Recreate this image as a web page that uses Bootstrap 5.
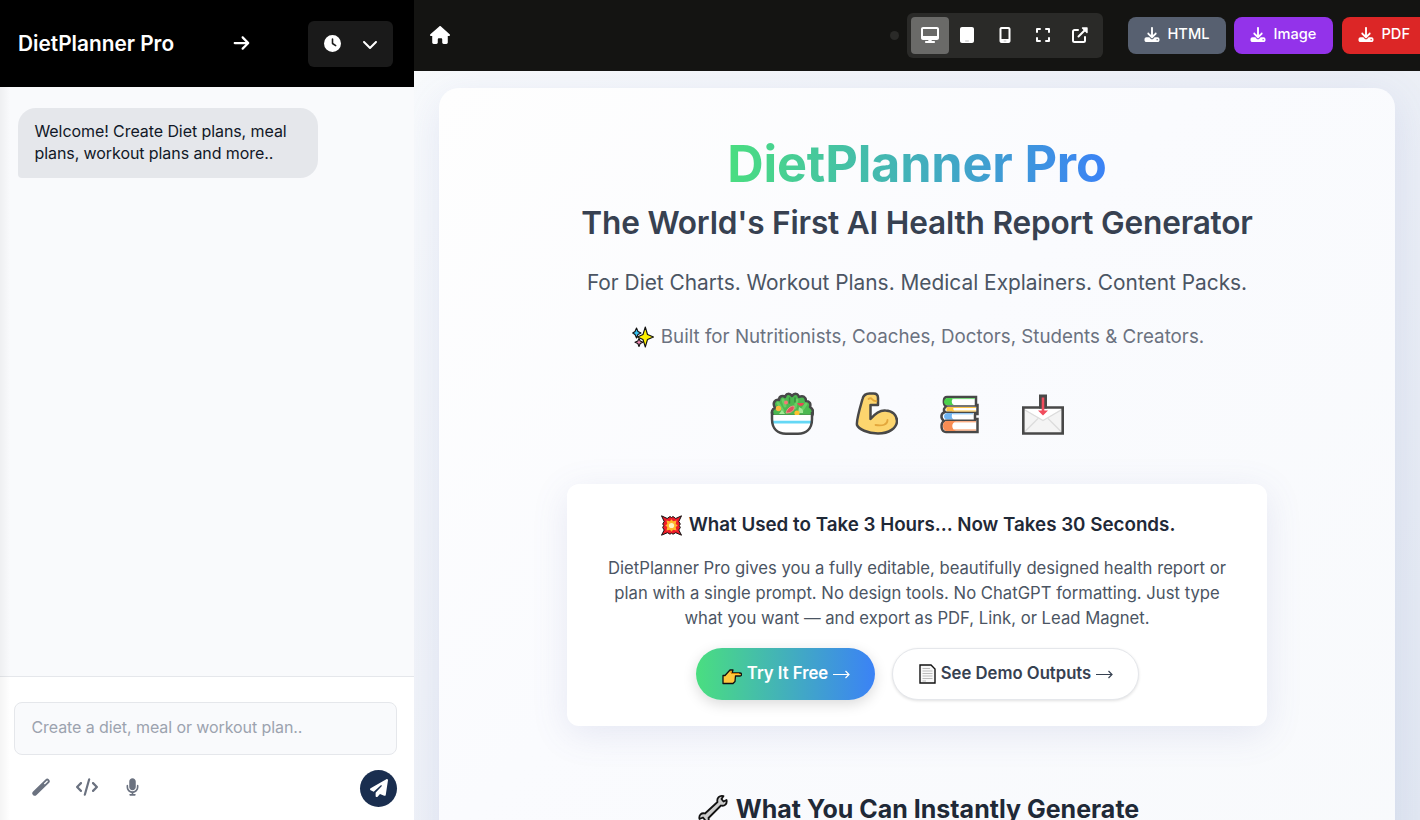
<!DOCTYPE html>
<html lang="en">
<head>
<meta charset="utf-8">
<meta name="viewport" content="width=device-width, initial-scale=1">
<title>DietPlanner Pro</title>
<link href="https://cdn.jsdelivr.net/npm/bootstrap@5.3.0/dist/css/bootstrap.min.css" rel="stylesheet">
<style>
  body { font-family: Inter, "Liberation Sans", sans-serif; color: #1f2937; height: 820px; overflow: hidden; }
  svg { display: block; flex: none; }
  .fa { fill: currentColor; }
  .line { fill: none; stroke: currentColor; }

  .side { width: 414px; background: #f9fafc; position: relative; }
  .side-edge { position: absolute; inset: 87px auto 0 0; width: 10px; background: linear-gradient(90deg, rgba(0,0,0,.045), transparent); pointer-events: none; }
  .side-head { height: 87px; background: #000; padding: 0 21px 0 18px; }
  .side-title { font-size: 20.8px; font-weight: 600; line-height: 1.2; width: 215px; padding-top: 2px; white-space: nowrap; }
  .history { width: 85px; height: 46px; background: #1a1a1a; border-radius: 6px; padding: 0 15px 0 16px; }
  .chat-area { padding: 21px 18px; }
  .bubble { width: 300px; height: 70px; background: #e5e7eb; border-radius: 18px 18px 18px 4px; padding: 12px 16.5px; font-size: 16px; letter-spacing: -.08px; line-height: 22.4px; color: #111827; white-space: nowrap; }
  .composer { height: 144px; background: #fff; border-top: 1px solid #e5e7eb; padding: 25px 17px 0 14px; }
  .prompt { height: 53px; border: 1px solid #e5e7eb; background: #f9fafc; border-radius: 8px; padding: 0 16.5px 4px; font-size: 16px; letter-spacing: -.08px; color: #9ca3af; }
  .tools { color: #6b7280; padding-top: 15px; }
  .tools > svg { margin-bottom: 3px; }
  .nudge { margin-bottom: 2px; }
  .send { width: 37px; height: 37px; background: #1a2e4f; }

  .stage { width: 1006px; }
  .topbar { height: 71px; background: #141412; padding-left: 16px; }
  .dot { width: 9px; height: 9px; background: #2a2a28; }
  .devices { height: 45px; width: 196px; background: #2a2a28; border-radius: 6px; padding: 4px; }
  .dev { width: 37.6px; height: 37px; border-radius: 4px; padding-bottom: 2px; }
  .dev.on { background: #6a6a68; }
  .export { height: 37px; border-radius: 8px; font-size: 14.6px; font-weight: 500; padding: 0 16px 2px; gap: 7.5px; }
  .ex-html { background: #576070; width: 98px; }
  .ex-image { background: #9333ea; width: 99px; }
  .ex-pdf { background: #dc2626; width: 100px; }

  .canvas-bg { min-height: 0; background: linear-gradient(135deg, #f8fafc 0%, #eef1f7 45%, #e2e8f2 100%); padding: 17px 25px 0; overflow: hidden; }
  .sheet { height: 1200px; border-radius: 20px; background: linear-gradient(135deg, #fefefe 0%, #fafbfe 35%, #f7f9fb 100%); box-shadow: 0 10px 40px rgba(90,110,190,.13); padding-top: 48px; text-align: center; white-space: nowrap; }
  .hero { font-size: 50.4px; font-weight: 700; line-height: 56px; letter-spacing: -.2px; margin: 0; background: linear-gradient(90deg, #4ade80, #3b82f6); -webkit-background-clip: text; background-clip: text; color: transparent; }
  .tagline { font-size: 31.6px; font-weight: 600; line-height: 38px; letter-spacing: -.2px; color: #374151; margin: 12px 0 0; }
  .uses { font-size: 20.86px; line-height: 34px; color: #4b5563; margin: 24px 0 0; }
  .built { font-size: 18.75px; line-height: 30px; color: #6b7280; margin-top: 22px; gap: 7px; padding-left: 2px; }
  .pics { gap: 40px; margin-top: 40px; padding-left: 1px; }
  .panel { width: 700px; height: 242px; margin: 48px auto 0; border-radius: 12px; background: #fff; box-shadow: 0 8px 36px rgba(90,100,170,.13); padding-top: 26px; }
  .panel-title { font-size: 18.78px; font-weight: 600; line-height: 30px; gap: 7px; padding-left: 2px; }
  .panel-copy { font-size: 16.66px; line-height: 25px; color: #4b5563; margin: 16px 0 17px; }
  .pill { height: 52px; font-size: 16.7px; font-weight: 600; gap: 5px; padding-left: 2px; }
  .pill-try { width: 179px; color: #fff; background: linear-gradient(90deg, #4ade80, #3b82f6); box-shadow: 0 4px 14px rgba(0,0,0,.15); }
  .pill-demo { width: 247px; color: #374151; background: #fff; border: 1px solid #e5e7eb; box-shadow: 0 1px 3px rgba(0,0,0,.12); }
  .section-title { font-size: 25px; font-weight: 700; line-height: 32px; margin-top: 67px; gap: 8px; padding-left: 3px; }
</style>
</head>
<body>
<div class="d-flex h-100">
  <aside class="side d-flex flex-column flex-shrink-0">
    <header class="side-head d-flex align-items-center text-white">
      <div class="side-title">DietPlanner Pro</div>
      <svg class="fa nudge" width="17" height="18" viewBox="0 0 448 512"><path d="M438.6 278.6c12.500-12.500 12.500-32.800 0-45.300l-160-160c-12.500-12.500-32.800-12.500-45.300 0s-12.500 32.800 0 45.300L338.800 224 32 224c-17.700 0-32 14.300-32 32s14.300 32 32 32l306.700 0L233.400 393.400c-12.500 12.500-12.500 32.800 0 45.300s32.800 12.500 45.300 0l160-160z"/></svg>
      <div class="history d-flex align-items-center justify-content-between ms-auto">
        <svg class="fa" width="17" height="17" viewBox="0 0 512 512"><path fill-rule="evenodd" d="M256 0a256 256 0 1 1 0 512A256 256 0 1 1 256 0zM232 120V256c0 8 4 15.500 10.700 20l96 64c11 7.400 25.900 4.400 33.300-6.700s4.400-25.900-6.700-33.300L280 243.200V120c0-13.300-10.700-24-24-24s-24 10.700-24 24z"/></svg>
        <svg class="fa" width="16" height="16" viewBox="0 0 512 512"><path d="M233.400 406.600c12.500 12.500 32.800 12.500 45.300 0l192-192c12.500-12.500 12.500-32.800 0-45.300s-32.800-12.500-45.300 0L256 338.700 86.600 169.400c-12.500-12.500-32.800-12.500-45.300 0s-12.500 32.800 0 45.300l192 192z"/></svg>
      </div>
    </header>
    <div class="chat-area flex-grow-1">
      <div class="bubble">Welcome! Create Diet plans, meal<br>plans, workout plans and more..</div>
    </div>
    <div class="composer">
      <div class="prompt d-flex align-items-center">Create a diet, meal or workout plan..</div>
      <div class="tools d-flex align-items-center">
        <svg width="18" height="18" viewBox="0 0 18 18" style="margin-left:18px"><path d="M2.800 15.200 15.200 3.200" stroke="currentColor" stroke-width="5" stroke-linecap="round"/><path d="M12.600 5.700 15.200 3.200" stroke="#fff" stroke-width="1.200" stroke-linecap="round"/></svg>
        <svg class="fa" width="22" height="18" viewBox="0 0 640 512" style="margin-left:26px"><path d="M392.800 1.200c-17-4.900-34.700 5-39.600 22l-128 448c-4.900 17 5 34.700 22 39.600s34.700-5 39.600-22l128-448c4.900-17-5-34.700-22-39.600zm80.600 120.100c-12.500 12.500-12.500 32.800 0 45.300L562.700 256l-89.400 89.400c-12.500 12.500-12.500 32.800 0 45.300s32.800 12.500 45.300 0l112-112c12.500-12.500 12.500-32.800 0-45.300l-112-112c-12.500-12.500-32.800-12.500-45.300 0zm-306.700 0c-12.500-12.500-32.800-12.500-45.300 0l-112 112c-12.500 12.500-12.500 32.800 0 45.300l112 112c12.500 12.500 32.800 12.500 45.300 0s12.500-32.800 0-45.300L77.300 256l89.400-89.400c12.500-12.500 12.500-32.800 0-45.300z"/></svg>
        <svg class="fa" width="13" height="18" viewBox="0 0 384 512" style="margin-left:28px"><path d="M192 0C139 0 96 43 96 96V256c0 53 43 96 96 96s96-43 96-96V96c0-53-43-96-96-96zM64 216c0-13.300-10.700-24-24-24s-24 10.700-24 24v40c0 89.100 66.200 162.700 152 174.400V464H120c-13.300 0-24 10.700-24 24s10.700 24 24 24h144c13.300 0 24-10.700 24-24s-10.700-24-24-24H216V430.400c85.800-11.700 152-85.300 152-174.400V216c0-13.300-10.700-24-24-24s-24 10.700-24 24v40c0 70.700-57.300 128-128 128s-128-57.300-128-128V216z"/></svg>
        <div class="send rounded-circle d-flex align-items-center justify-content-center text-white ms-auto">
          <svg class="fa nudge" width="18" height="18" viewBox="0 0 512 512"><path d="M498.100 5.600c10.100 7 15.400 19.100 13.500 31.200l-64 416c-1.500 9.700-7.400 18.200-16 23s-18.900 5.400-28 1.600L284 427.700l-68.500 74.100c-8.900 9.700-22.900 12.900-35.200 8.100S160 493.200 160 480V396.400c0-4 1.500-7.800 4.200-10.700L331.800 202.800c5.800-6.300 5.600-16-.4-22s-15.700-6.400-22-.7L106 360.800 17.700 316.600C7.100 311.300 .3 300.700 0 288.900s5.900-22.800 16.100-28.700l448-256c10.700-6.100 23.900-5.500 34 1.400z"/></svg>
        </div>
      </div>
    </div>
    <div class="side-edge"></div>
  </aside>

  <main class="stage d-flex flex-column flex-shrink-0">
    <nav class="topbar d-flex flex-shrink-0 align-items-center text-white overflow-hidden">
      <svg class="fa nudge" width="20" height="18" viewBox="0 0 576 512"><path d="M575.800 255.500c0 18-15 32.100-32 32.100h-32l.7 160.200c0 2.700-.2 5.400-.5 8.100V472c0 22.100-17.900 40-40 40H392c-22.100 0-40-17.900-40-40V384c0-17.700-14.300-32-32-32H256c-17.700 0-32 14.300-32 32v88c0 22.100-17.900 40-40 40H104c-22.100 0-40-17.900-40-40V287.600H32c-18 0-32-14-32-32.100c0-9 3-17 10-24L266.400 8c7-7 15-8 22-8s15 2 21 7L564.800 231.500c8 7 12 15 11 24z"/></svg>
      <div class="dot rounded-circle flex-shrink-0" style="margin-left:440px"></div>
      <div class="devices d-flex flex-shrink-0" style="margin-left:8px">
        <div class="dev on d-flex align-items-center justify-content-center"><svg class="fa" width="18" height="16" viewBox="0 0 576 512"><path fill-rule="evenodd" d="M64 0C28.700 0 0 28.700 0 64V352c0 35.300 28.700 64 64 64H240l-10.700 32H160c-17.700 0-32 14.300-32 32s14.300 32 32 32H416c17.700 0 32-14.300 32-32s-14.300-32-32-32H346.700L336 416H512c35.300 0 64-28.700 64-64V64c0-35.300-28.700-64-64-64H64zM512 64V288H64V64H512z"/></svg></div>
        <div class="dev d-flex align-items-center justify-content-center"><svg class="fa" width="14" height="16" viewBox="0 0 448 512"><path d="M64 0C28.700 0 0 28.700 0 64V448c0 35.300 28.700 64 64 64H384c35.300 0 64-28.700 64-64V64c0-35.300-28.700-64-64-64H64z"/><path d="M176 432h96c8.800 0 16 7.200 16 16s-7.200 16-16 16H176c-8.800 0-16-7.200-16-16s7.200-16 16-16z" fill="#bbb"/></svg></div>
        <div class="dev d-flex align-items-center justify-content-center"><svg class="fa" width="12" height="16" viewBox="0 0 384 512"><path fill-rule="evenodd" d="M16 64C16 28.700 44.700 0 80 0H304c35.300 0 64 28.700 64 64V448c0 35.300-28.700 64-64 64H80c-35.300 0-64-28.700-64-64V64zM304 64H80V384H304V64z"/><path d="M144 448c0 8.800 7.200 16 16 16h64c8.800 0 16-7.200 16-16s-7.200-16-16-16H160c-8.800 0-16 7.200-16 16z" fill="#bbb"/></svg></div>
        <div class="dev d-flex align-items-center justify-content-center"><svg class="line" width="14" height="16" viewBox="0 0 14 16" stroke-width="2" stroke-linecap="round" stroke-linejoin="round"><path d="M1 5V2h3M10 2h3v3M13 11v3h-3M4 14H1v-3"/></svg></div>
        <div class="dev d-flex align-items-center justify-content-center"><svg class="line" width="16" height="16" viewBox="0 0 16 16" stroke-width="2" stroke-linecap="round" stroke-linejoin="round"><path d="M6 3H2.500A1.500 1.500 0 0 0 1 4.500v9A1.500 1.500 0 0 0 2.500 15h9a1.500 1.500 0 0 0 1.500-1.500V10M6.500 9.500 13 3"/><path d="M10.500 1H15v4.500z" fill="currentColor" stroke-width="1.400"/></svg></div>
      </div>
      <div class="export ex-html d-flex align-items-center flex-shrink-0" style="margin-left:25px"><svg class="fa" width="16" height="15" viewBox="0 0 512 512"><use href="#dl"/></svg><span>HTML</span></div>
      <div class="export ex-image d-flex align-items-center flex-shrink-0" style="margin-left:8px"><svg class="fa" width="16" height="15" viewBox="0 0 512 512"><use href="#dl"/></svg><span>Image</span></div>
      <div class="export ex-pdf d-flex align-items-center flex-shrink-0" style="margin-left:9px"><svg class="fa" width="16" height="15" viewBox="0 0 512 512"><path id="dl" fill-rule="evenodd" d="M288 32c0-17.700-14.300-32-32-32s-32 14.300-32 32V274.700l-73.400-73.400c-12.500-12.500-32.800-12.500-45.300 0s-12.500 32.800 0 45.300l128 128c12.500 12.500 32.800 12.500 45.300 0l128-128c12.500-12.500 12.500-32.800 0-45.300s-32.800-12.500-45.300 0L288 274.700V32zM64 352c-35.300 0-64 28.700-64 64v32c0 35.300 28.700 64 64 64H448c35.300 0 64-28.700 64-64V416c0-35.300-28.700-64-64-64H346.500l-45.300 45.300c-25 25-65.500 25-90.500 0L165.500 352H64zm368 56a24 24 0 1 1 0 48 24 24 0 1 1 0-48z"/></svg><span>PDF</span></div>
    </nav>

    <div class="canvas-bg flex-grow-1">
      <div class="sheet">
        <h1 class="hero d-inline-block">DietPlanner Pro</h1>
        <h2 class="tagline">The World's First AI Health Report Generator</h2>
        <p class="uses mb-0">For Diet Charts. Workout Plans. Medical Explainers. Content Packs.</p>
        <div class="built d-flex justify-content-center align-items-center">
          <svg width="22" height="22" viewBox="0 0 22 22" stroke="#111" stroke-width="1.100" stroke-linejoin="round"><path d="M4.500 2 6 5.500 9 7 6 8.500 4.500 12 3 8.500 .7 7 3 5.500z" fill="#35c1f1"/><path d="M7 12.500 8.200 15 11 16.300 8.200 17.500 7 20.500 5.800 17.500 3 16.300 5.800 15z" fill="#f58fb8"/><path d="M13.300 1 15.500 8.500 21.500 11 15.500 13.500 13.300 21 11 13.500 5.500 11 11 8.500z" fill="#fff100"/></svg>
          <span>Built for Nutritionists, Coaches, Doctors, Students &amp; Creators.</span>
        </div>
        <div class="pics d-flex justify-content-center">
          <!-- salad bowl -->
          <svg width="44" height="44" viewBox="0 0 44 44"><path d="M3 24C1 20 2 17 5 16 2 11 5 7 9 8c0-4 4-5 6-3 1-4 5-4 7-1 2-3 6-3 7 1 4-2 7 0 7 4 4 0 5 3 4 6 3 2 4 5 2 9z" fill="#4cb850" stroke="#484848" stroke-width="2.500" stroke-linejoin="round"/><path d="M8 11l5 8M13 8l2 6M27 8l-2 8M36 12l-4 6" stroke="#67ce62" stroke-width="3" stroke-linecap="round"/><path d="M19.500 6v5M25 6v4" stroke="#398a40" stroke-width="1.500" stroke-linecap="round"/><circle cx="8.500" cy="16.500" r="2.700" fill="#fdb83e"/><circle cx="16" cy="10.500" r="2" fill="#f57778"/><path d="M16 21c1-4 4-7 8-7 1 4-2 7-8 7z" fill="#e0525f" stroke="#fa9b91" stroke-width=".8"/><path d="M27 11h7c-1 4-5 4-7 0z" fill="#e84855"/><path d="M29 15q5 2 4 6h-5zM12 18l3 4H9z" fill="#a2e894"/><circle cx="27" cy="21" r="2.600" fill="#fdc12f"/><path d="M2.300 23h39.400v4c0 10-6 14-13.700 14H16C8 41 2.300 37 2.300 27z" fill="#fff"/><path d="M3 28.700h38v2.800H3z" fill="#65d8f5"/><path d="M2 20v7c0 10 6 14.700 14 14.700h12c8 0 14-4.700 14-14.700v-7" fill="none" stroke="#484848" stroke-width="2.500"/></svg>
          <!-- flexed arm -->
          <svg width="44" height="44" viewBox="-.5 0 44 44"><path d="M8 7c1-4 3-5.500 7-5.500h4c3 0 4.500 1.500 4.500 4.500v7H16v14c5-6 9-9 15-8.500 7 0 11.500 5 11.500 10.500 0 7-8 12.500-19 12.500C13 41.500 4 37 2.500 33 1.500 29 6 14 8 7z" fill="#fcd56e" stroke="#484848" stroke-width="2.500" stroke-linejoin="round"/><path d="M14 7c4-3 3 3 8 2M21 33c7 1 12 0 12-5" fill="none" stroke="#e3a73c" stroke-width="1.800" stroke-linecap="round"/></svg>
          <!-- books -->
          <svg width="44" height="44" viewBox="0 0 44 44"><path d="M9 5h29v8h1.500v9H37v5h2.500v13H8c-5 0-6-8-2-11-4-3-3-8 1-9-2-2-1-4 1-5-3-3-3-10 1-10z" fill="#fff" stroke="#484848" stroke-width="2.500"/><path d="M16 6H9c-4 1-4 7 0 7h7c-3-1-3-6 0-7z" fill="#4bd14c"/><path d="M16 15H8.500v4.500H17c-2-1-2-4-1-4.500z" fill="#fdc446"/><path d="M16 21H9c-4 1-4 6 0 6.500h7c-3-1-3-6 0-6.500z" fill="#6fb4f1"/><path d="M18 29H8c-4 1-4 9 0 10h10c-5-2-5-8 0-10z" fill="#f88c53"/><path d="M8 14h31M8 20.300h31M7 28.300h31" stroke="#484848" stroke-width="1.500"/><path d="M14 6.600h23" stroke="#72d875"/><path d="M14 15.500h24M14 19h24" stroke="#fdc446"/><path d="M15 21.800h20" stroke="#6fb4f1"/><path d="M15 29.800h23M16 38h22" stroke="#f88c53"/></svg>
          <!-- envelope with incoming arrow -->
          <svg width="44" height="44" viewBox="1 -.5 44 44"><path d="M2.300 15h39.400v26H2.300z" fill="#f4f4f4"/><path d="M3 16h38L22 28z" fill="#fff"/><path d="m3 17 19 11 19-11M3 40l14-14M41 40 27 26" fill="none" stroke="#dcdcdc" stroke-width="1.300"/><path d="M2.300 15h39.400v26H2.300z" fill="none" stroke="#484848" stroke-width="2.600"/><path d="M18 2h8v14h-8z" fill="#484848"/><path d="M20.700 5h2.600v13H27l-5 5-5-5h3.700z" fill="#f14c5d"/></svg>
        </div>
        <section class="panel">
          <div class="panel-title d-flex align-items-center justify-content-center">
            <svg width="21" height="21" viewBox="0 0 21 21"><path d="m.5.8 5.700 2.700L9 1.500l1.500 1L12 1.500l2.700 2L20.500.8l-2.700 5.700 1.500 2.500-1 1.500 1 2-1.500 2.500 2.700 5.200-5.800-2.500-2.700 1.500-1.500-1-1.500 1-2.500-1.500-6 2.500 2.700-5.200-1.500-2.500 1-2-1-1.500 1.500-2.500z" fill="#f01c28" stroke="#111" stroke-width="1"/><path d="m5.500 5.500 3.500.8 1.500-2 1.500 2 3.500-.8-.8 3.500 2 1.500-2 1.500.8 3.500-3.500-.8-1.500 2-1.500-2-3.500.8.800-3.500-2-1.500 2-1.500z" fill="#ffb72c"/><circle cx="10.500" cy="10.500" r="2.600" fill="#fff5c5"/></svg>
            <span>What Used to Take 3 Hours... Now Takes 30 Seconds.</span>
          </div>
          <p class="panel-copy">DietPlanner Pro gives you a fully editable, beautifully designed health report or<br>plan with a single prompt. No design tools. No ChatGPT formatting. Just type<br>what you want — and export as PDF, Link, or Lead Magnet.</p>
          <div class="d-flex justify-content-center" style="gap:17px">
            <div class="pill pill-try rounded-pill d-flex align-items-center justify-content-center">
              <svg class="mt-1" width="20" height="17" viewBox="0 2 20 17"><path d="M1 9.500h2L8 4h3l-1 3h8c2 0 2 3 0 3h-4.500l-.5 5.500-2 2H1z" fill="#ffc83d" stroke="#111" stroke-width="1.300" stroke-linejoin="round" /><path d="M8.500 5.500 10 7.500h7" fill="none" stroke="#d67d00" stroke-width="1.200"/></svg>
              <span>Try It Free</span><svg class="line" width="17" height="12" viewBox="0 0 17 12" stroke-width="1.200"><path d="M0 6.500h16M12.500 3 16 6.500 12.500 10"/></svg>
            </div>
            <div class="pill pill-demo rounded-pill d-flex align-items-center justify-content-center">
              <svg width="17" height="20" viewBox="0 0 17 20"><path d="M1 1h11l4 4v14H1z" fill="#f8f8f8" stroke="#111" stroke-width="1.400"/><path d="M3.500 4.500H11M3.500 7h10M3.500 9.500h10M3.500 12h10M3.500 14.500h10M3.500 17H7" stroke="#bbb" stroke-width="1"/></svg>
              <span>See Demo Outputs</span><svg class="line" width="17" height="12" viewBox="0 0 17 12" stroke-width="1.200"><path d="M0 6.500h16M12.500 3 16 6.500 12.500 10"/></svg>
            </div>
          </div>
        </section>
        <div class="section-title d-flex align-items-center justify-content-center">
          <svg width="30" height="30" viewBox="0 0 30 30"><path d="M19.500 8c-1-4 2-7 6-6l-2 3 2 2.500 3-1.500c1 4-2 6.500-5.500 5.500L10.500 24c1 3-2 6-6 5l2.500-3-2-2.500-3.500 1.500c-1-4 2-6.500 5.500-5.500z" fill="#ccc" stroke="#111" stroke-width="1.800" stroke-linejoin="round"/></svg>
          <span>What You Can Instantly Generate</span>
        </div>
      </div>
    </div>
  </main>
</div>
<script src="https://cdn.jsdelivr.net/npm/bootstrap@5.3.0/dist/js/bootstrap.bundle.min.js"></script>
</body>
</html>
